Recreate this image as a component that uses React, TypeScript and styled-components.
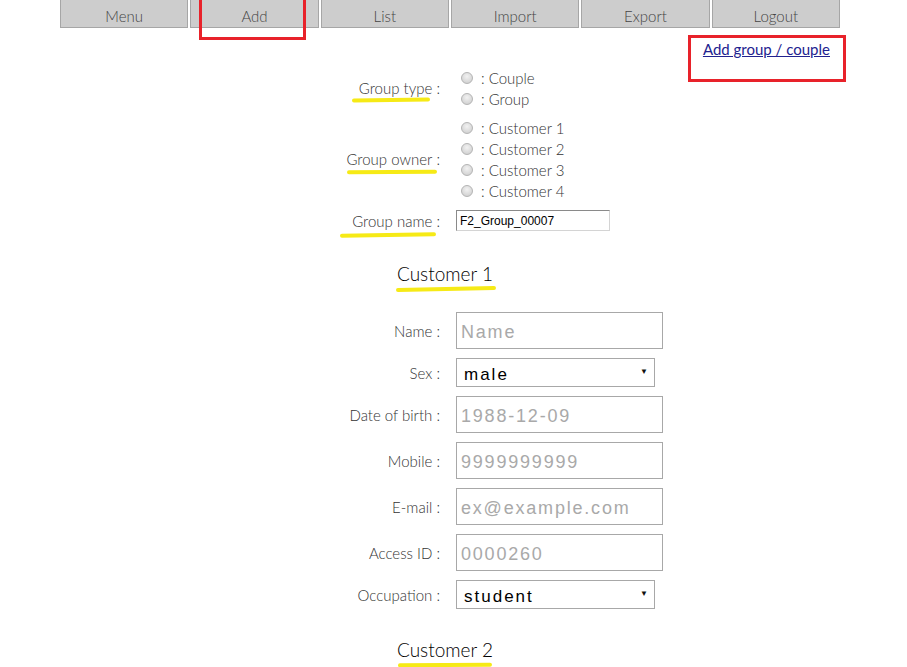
import styled, { createGlobalStyle } from "styled-components"

const GlobalStyle = createGlobalStyle`
    html, body {
        margin: 0;
        padding: 0;
        background: #fff;
        font-family: "Lato", "Open Sans", sans-serif;
        color: #444;
        overflow: hidden;
    }
`

const Page = styled.div`
    position: relative;
    width: 780px;
    margin-left: 60px;
    height: 667px;
`

const NavBar = styled.nav`
    display: grid;
    grid-template-columns: repeat(6, 1fr);
    gap: 2px;
`

const NavButton = styled.div`
    height: 28px;
    box-sizing: border-box;
    padding-top: 5px;
    background: #cdcdcd;
    border: 1px solid #a6a6a6;
    border-top: none;
    display: flex;
    align-items: center;
    justify-content: center;
    font-size: 15px;
    font-weight: 300;
    color: #444;
    cursor: pointer;
`

const LinkRow = styled.div`
    display: flex;
    justify-content: flex-end;
    padding-right: 10px;
    margin-top: 11px;
    line-height: 20px;
`

const TopLink = styled.a`
    font-size: 15px;
    font-weight: 400;
    color: #22228f;
    text-decoration: underline;
    cursor: pointer;
`

const FieldRow = styled.div<{ $mt?: number }>`
    display: grid;
    grid-template-columns: 380px 1fr;
    column-gap: 16px;
    align-items: center;
    margin-top: ${p => p.$mt ?? 9}px;
`

const Label = styled.label`
    justify-self: end;
    font-size: 15px;
    font-weight: 300;
    color: #333;
    white-space: nowrap;
`

const Marked = styled.span<{ $l: number; $r: number; $y: number; $rot?: number }>`
    position: relative;
    &::after {
        content: "";
        position: absolute;
        left: ${p => p.$l}px;
        right: ${p => p.$r}px;
        bottom: ${p => p.$y}px;
        height: 4px;
        border-radius: 3px;
        background: #f6ea16;
        transform: rotate(${p => p.$rot ?? -0.6}deg);
    }
`

const RadioList = styled.div`
    display: flex;
    flex-direction: column;
    padding-left: 5px;
`

const RadioLine = styled.label`
    display: flex;
    align-items: center;
    height: 21px;
    font-size: 15px;
    font-weight: 300;
    color: #333;
`

const Radio = styled.input.attrs({ type: "radio" })`
    appearance: none;
    width: 12px;
    height: 12px;
    margin: 0 8px 0 0;
    border-radius: 50%;
    border: 1px solid #b4b4b4;
    background: radial-gradient(circle at 50% 35%, #f2f2f2 0%, #d6d6d6 70%, #c8c8c8 100%);
`

const SmallInput = styled.input`
    width: 154px;
    height: 21px;
    box-sizing: border-box;
    border: 1px solid #d4d4d4;
    border-top-color: #8a8a8a;
    border-left-color: #8a8a8a;
    padding: 0 3px;
    font-family: "Liberation Sans", Arial, sans-serif;
    font-size: 12px;
    color: #000;
    outline: none;
`

const Heading = styled.h2<{ $mt: number }>`
    margin: ${p => p.$mt}px 0 0;
    padding-left: 337px;
    font-size: 19px;
    font-weight: 300;
    line-height: 24px;
    color: #000;
`

const FieldList = styled.div`
    display: flex;
    flex-direction: column;
    gap: 9px;
    margin-top: 26px;
`

const BigInput = styled.input`
    width: 207px;
    height: 37px;
    box-sizing: border-box;
    border: 1px solid #a8a8a8;
    padding: 3px 4px 0;
    font-family: "Liberation Sans", Arial, sans-serif;
    font-size: 18px;
    letter-spacing: 1.8px;
    color: #000;
    outline: none;
    &::placeholder {
        color: #a9a9a9;
    }
`

const SelectBox = styled.div`
    position: relative;
    width: 199px;
    height: 29px;
    &::after {
        content: "▼";
        position: absolute;
        right: 7px;
        top: 8px;
        font-size: 8px;
        color: #111;
        pointer-events: none;
    }
`

const Select = styled.select`
    appearance: none;
    width: 100%;
    height: 100%;
    box-sizing: border-box;
    border: 1px solid #a8a8a8;
    border-radius: 0;
    background: #fff;
    padding: 3px 7px 0;
    font-family: "Liberation Sans", Arial, sans-serif;
    font-size: 17px;
    letter-spacing: 2px;
    color: #000;
    outline: none;
`

const Annotation = styled.div<{ $x: number; $y: number; $w: number; $h: number }>`
    position: absolute;
    left: ${p => p.$x}px;
    top: ${p => p.$y}px;
    width: ${p => p.$w}px;
    height: ${p => p.$h}px;
    box-sizing: border-box;
    border: 3px solid #e8222a;
    pointer-events: none;
`

const navItems = ["Menu", "Add", "List", "Import", "Export", "Logout"]

const textFields: Record<string, { ph: string; value?: string }> = {
    name: { ph: "Name" },
    dob: { ph: "1988-12-09" },
    mobile: { ph: "9999999999" },
    email: { ph: "ex@example.com" },
    access: { ph: "0000260" },
}

export default function App() {
    return (
        <>
            <GlobalStyle />
            <Page>
                <NavBar>
                    {navItems.map(n => (
                        <NavButton key={n}>{n}</NavButton>
                    ))}
                </NavBar>

                <LinkRow>
                    <TopLink>Add group / couple</TopLink>
                </LinkRow>

                <FieldRow $mt={8}>
                    <Label>
                        <Marked $l={-7} $r={2} $y={-5}>Group type</Marked> :
                    </Label>
                    <RadioList>
                        <RadioLine><Radio name="gtype" />: Couple</RadioLine>
                        <RadioLine><Radio name="gtype" />: Group</RadioLine>
                    </RadioList>
                </FieldRow>

                <FieldRow $mt={8}>
                    <Label>
                        <Marked $l={1} $r={-5} $y={-6} $rot={-0.3}>Group owner</Marked> :
                    </Label>
                    <RadioList>
                        {[1, 2, 3, 4].map(i => (
                            <RadioLine key={i}><Radio name="owner" />: Customer {i}</RadioLine>
                        ))}
                    </RadioList>
                </FieldRow>

                <FieldRow $mt={9}>
                    <Label>
                        <Marked $l={-12} $r={-4} $y={-7} $rot={-0.8}>Group name</Marked> :
                    </Label>
                    <SmallInput defaultValue="F2_Group_00007" />
                </FieldRow>

                <Heading $mt={31}>
                    <Marked $l={-1} $r={-3} $y={-6} $rot={-1.2}>Customer 1</Marked>
                </Heading>

                <FieldList>
                    <FieldRow $mt={0}>
                        <Label>Name :</Label>
                        <BigInput placeholder={textFields.name.ph} />
                    </FieldRow>
                    <FieldRow $mt={0}>
                        <Label>Sex :</Label>
                        <SelectBox>
                            <Select defaultValue="male">
                                <option value="male">male</option>
                                <option value="female">female</option>
                            </Select>
                        </SelectBox>
                    </FieldRow>
                    <FieldRow $mt={0}>
                        <Label>Date of birth :</Label>
                        <BigInput placeholder={textFields.dob.ph} />
                    </FieldRow>
                    <FieldRow $mt={0}>
                        <Label>Mobile :</Label>
                        <BigInput placeholder={textFields.mobile.ph} />
                    </FieldRow>
                    <FieldRow $mt={0}>
                        <Label>E-mail :</Label>
                        <BigInput placeholder={textFields.email.ph} />
                    </FieldRow>
                    <FieldRow $mt={0}>
                        <Label>Access ID :</Label>
                        <BigInput placeholder={textFields.access.ph} />
                    </FieldRow>
                    <FieldRow $mt={0}>
                        <Label>Occupation :</Label>
                        <SelectBox>
                            <Select defaultValue="student">
                                <option value="student">student</option>
                                <option value="employee">employee</option>
                            </Select>
                        </SelectBox>
                    </FieldRow>
                </FieldList>

                <Heading $mt={29}>
                    <Marked $l={1} $r={1} $y={-6} $rot={-0.4}>Customer 2</Marked>
                </Heading>

                <Annotation $x={139} $y={-4} $w={107} $h={44} />
                <Annotation $x={628} $y={35} $w={158} $h={47} />
            </Page>
        </>
    )
}
